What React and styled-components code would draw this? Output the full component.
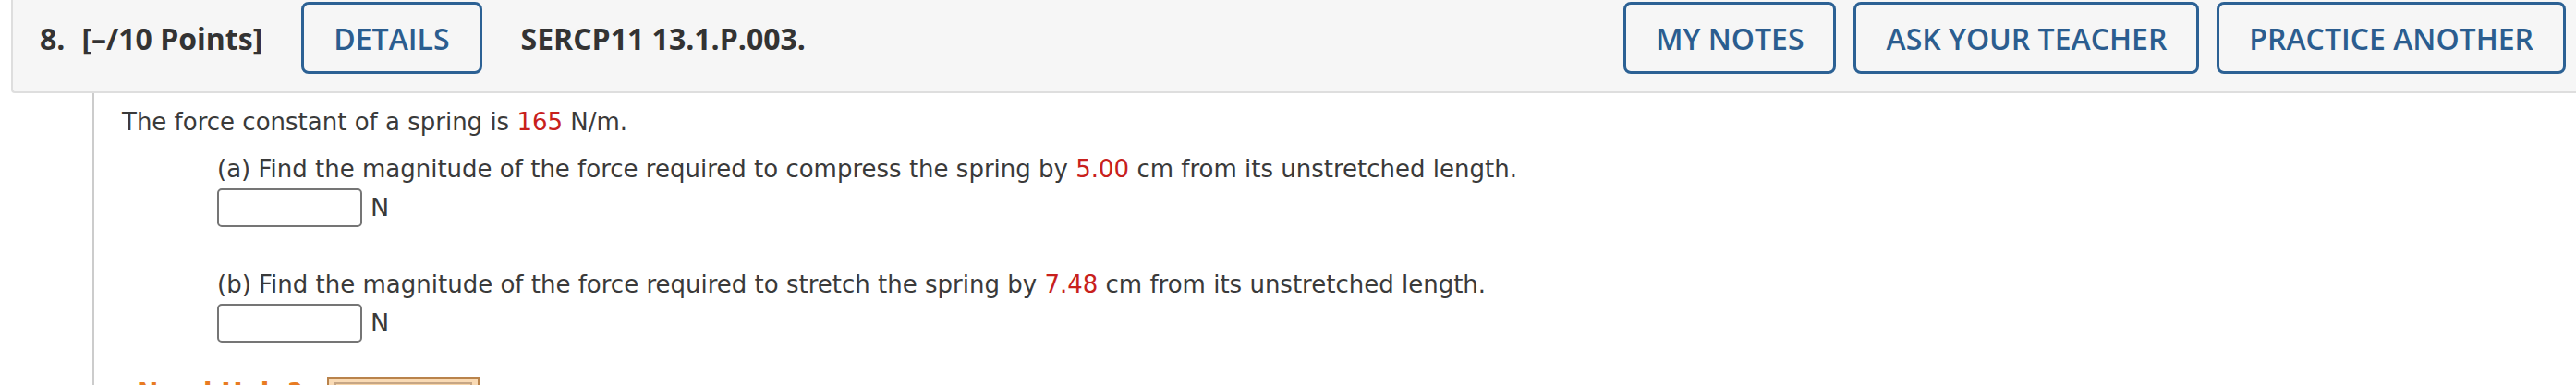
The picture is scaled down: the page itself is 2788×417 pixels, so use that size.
import React from "react";
import styled, { createGlobalStyle } from "styled-components";

const Global = createGlobalStyle`
  html, body { margin: 0; padding: 0; background: #ffffff; }
  body { font-family: "DejaVu Sans", Verdana, sans-serif; color: #3a3a3a; overflow: hidden; }
`;

const Question = styled.div`
  width: 2788px;
`;

const Header = styled.div`
  display: flex;
  align-items: center;
  margin-left: 12px;
  padding: 2px 11px 19px 29px;
  background: #f6f6f6;
  border-left: 2px solid #dedede;
  border-bottom: 2px solid #dedede;
  border-bottom-left-radius: 4px;
  font-family: "Open Sans", sans-serif;
`;

const HeadText = styled.span`
  font-weight: 700;
  font-size: 32px;
  color: #333;
  white-space: nowrap;
  margin: ${(p) => p.$margin || "0"};
  flex: ${(p) => (p.$grow ? 1 : "none")};
`;

const Actions = styled.div`
  display: flex;
  gap: 19px;
`;

const OutlineButton = styled.button`
  box-sizing: border-box;
  height: 78px;
  padding: 0 32px;
  border: 3px solid #2c6194;
  border-radius: 8px;
  background: transparent;
  font-family: "Open Sans", sans-serif;
  font-weight: 600;
  font-size: 32px;
  color: #2b5d8f;
  white-space: nowrap;
`;

const Body = styled.div`
  margin-left: 100px;
  border-left: 2px solid #cccccc;
  padding: 11px 0 0 30px;
  font-size: 26px;
  line-height: 40px;
`;

const Intro = styled.p`
  margin: 0;
`;

const Red = styled.span`
  color: #c8201c;
`;

const Part = styled.div`
  margin: ${(p) => p.$top}px 0 0 103px;
`;

const PartText = styled.p`
  margin: 0;
`;

const AnswerRow = styled.div`
  display: flex;
  align-items: center;
  gap: 9px;
  margin-top: 1px;
`;

const AnswerBox = styled.div`
  box-sizing: border-box;
  width: 157px;
  height: 42px;
  border: 2px solid #757575;
  border-radius: 5px;
  background: #fff;
`;

const Unit = styled.span`
  font-size: 27px;
`;

const HelpRow = styled.div`
  display: flex;
  align-items: flex-start;
  margin: 37px 0 0 16px;
  height: 40px;
`;

const HelpLabel = styled.span`
  font-weight: 700;
  font-size: 28px;
  line-height: 28px;
  color: #e87b22;
  margin-top: 4px;
  width: 206px;
`;

const HelpButton = styled.div`
  box-sizing: border-box;
  width: 165px;
  height: 50px;
  border: 2px solid #b9834b;
  background: #f9dab4;
  padding: 4px 6px;
`;

const HelpInner = styled.div`
  height: 100%;
  border: 2px solid #c7a684;
  border-bottom: none;
  background: #f6d3a6;
`;

export default function App() {
  return (
    <Question>
      <Global />
      <Header>
        <HeadText $margin="0 18px 0 0">8.</HeadText>
        <HeadText $margin="0 42px 0 0">[–/10 Points]</HeadText>
        <OutlineButton>DETAILS</OutlineButton>
        <HeadText $margin="0 0 0 42px" $grow>SERCP11 13.1.P.003.</HeadText>
        <Actions>
          <OutlineButton>MY NOTES</OutlineButton>
          <OutlineButton>ASK YOUR TEACHER</OutlineButton>
          <OutlineButton>PRACTICE ANOTHER</OutlineButton>
        </Actions>
      </Header>
      <Body>
        <Intro>
          The force constant of a spring is <Red>165</Red> N/m.
        </Intro>
        <Part $top={11}>
          <PartText>
            (a) Find the magnitude of the force required to compress the spring by <Red>5.00</Red> cm from its unstretched length.
          </PartText>
          <AnswerRow>
            <AnswerBox />
            <Unit>N</Unit>
          </AnswerRow>
        </Part>
        <Part $top={42}>
          <PartText>
            (b) Find the magnitude of the force required to stretch the spring by <Red>7.48</Red> cm from its unstretched length.
          </PartText>
          <AnswerRow>
            <AnswerBox />
            <Unit>N</Unit>
          </AnswerRow>
        </Part>
        <HelpRow>
          <HelpLabel>Need Help?</HelpLabel>
          <HelpButton>
            <HelpInner />
          </HelpButton>
        </HelpRow>
      </Body>
    </Question>
  );
}
